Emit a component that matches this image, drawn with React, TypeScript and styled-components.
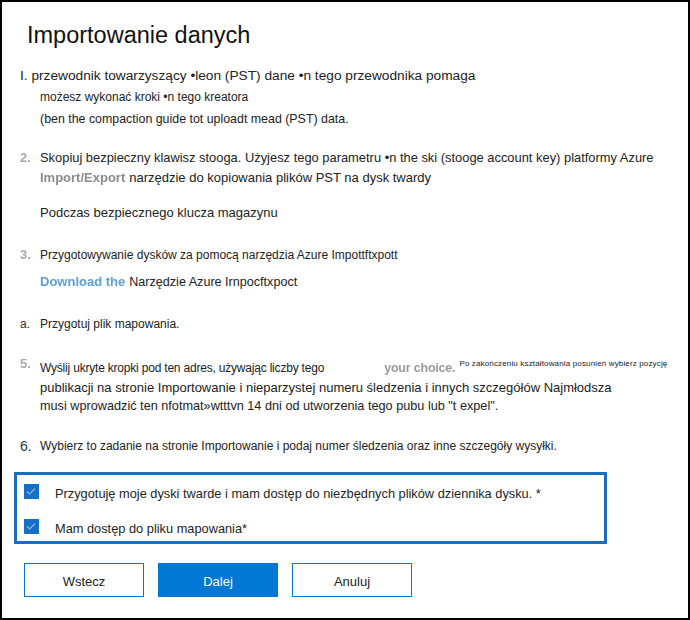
import React from "react";
import styled, { createGlobalStyle } from "styled-components";

const Global = createGlobalStyle`
  html, body { margin: 0; padding: 0; background: #fff; }
  body { font-family: "Liberation Sans", Arial, sans-serif; color: #222; }
`;

const Frame = styled.div`
  box-sizing: border-box;
  width: 690px;
  height: 620px;
  border: 2px solid #000;
  padding: 18px 0 0 12px;
  display: flex;
  flex-direction: column;
  overflow: hidden;
`;

const Title = styled.h1`
  margin: 0 0 0 13px;
  font-size: 23.5px;
  line-height: 30px;
  font-weight: normal;
  color: #111;
`;

const Step = styled.div<{ $mt: number }>`
  display: grid;
  grid-template-columns: 20px 1fr;
  align-items: start;
  margin-top: ${(p) => p.$mt}px;
  padding-left: 6px;
`;

const Lead = styled.div`
  grid-column: 1 / -1;
  font-size: 13.7px;
  line-height: 21px;
  white-space: nowrap;
  color: #222;
`;

const Num = styled.span<{ $faint?: boolean; $size?: number }>`
  font-size: ${(p) => p.$size ?? 13}px;
  line-height: 20px;
  color: ${(p) => (p.$faint ? "#a8a8a8" : "#333")};
  font-weight: ${(p) => (p.$faint ? "bold" : "normal")};
  filter: ${(p) => (p.$faint ? "blur(0.4px)" : "none")};
`;

const Body = styled.div`
  grid-column: 2;
  display: flex;
  flex-direction: column;
`;

const Line = styled.div<{ $size?: number; $ls?: number; $mt?: number; $lh?: number }>`
  font-size: ${(p) => p.$size ?? 13}px;
  letter-spacing: ${(p) => p.$ls ?? 0}px;
  line-height: ${(p) => p.$lh ?? 20}px;
  margin-top: ${(p) => p.$mt ?? 0}px;
  white-space: nowrap;
  color: #222;
`;

const Blurred = styled.span<{ $color: string; $size?: number; $ml?: number; $blur?: number }>`
  display: inline-block;
  font-weight: bold;
  font-size: ${(p) => p.$size ?? 13}px;
  color: ${(p) => p.$color};
  filter: blur(${(p) => p.$blur ?? 0.55}px);
  margin-left: ${(p) => p.$ml ?? 0}px;
  margin-right: 4px;
`;

const Tiny = styled.span`
  font-size: 8px;
  letter-spacing: 0.15px;
  vertical-align: 6px;
  color: #222;
`;

const Confirm = styled.div`
  box-sizing: border-box;
  width: 593px;
  margin-top: 16px;
  border: 3px solid #1a6ec0;
  padding: 9px 7px 2px;
  display: flex;
  flex-direction: column;
  gap: 15px;
`;

const Row = styled.label`
  display: flex;
  align-items: flex-start;
  gap: 16px;
`;

const Box = styled.span`
  width: 15px;
  height: 15px;
  flex: none;
  background: #1570c6;
  display: flex;
`;

const Label = styled.span`
  font-size: 12.8px;
  line-height: 20px;
  color: #1e1e1e;
  white-space: nowrap;
`;

const Actions = styled.div`
  display: flex;
  gap: 14px;
  margin: 19px 0 0 10px;
`;

const Button = styled.button<{ $primary?: boolean }>`
  box-sizing: border-box;
  width: 120px;
  height: 34px;
  border: 1px solid #0078d4;
  background: ${(p) => (p.$primary ? "#0078d4" : "#fff")};
  color: ${(p) => (p.$primary ? "#fff" : "#222")};
  font-family: "Liberation Sans", Arial, sans-serif;
  font-size: 13px;
  padding: 2px 0 0;
  cursor: pointer;
`;

const Check = () => (
  <svg width="15" height="15" viewBox="0 0 15 15">
    <polyline points="3,7.6 5.6,9.9 11,4.6" fill="none" stroke="#d6e6f6" strokeWidth="1" />
  </svg>
);

export default function App() {
  return (
    <>
      <Global />
      <Frame>
        <Title>Importowanie danych</Title>

        <Step $mt={15}>
          <Lead>I. przewodnik towarzyszący •leon (PST) dane •n tego przewodnika pomaga</Lead>
          <Body>
            <Line $lh={21} $mt={1} $size={12}>możesz wykonać kroki •n tego kreatora</Line>
            <Line $lh={21} $mt={1} $size={12.4}>(ben the compaction guide tot uploadt mead (PST) data.</Line>
          </Body>
        </Step>

        <Step $mt={18}>
          <Num $faint>2.</Num>
          <Body>
            <Line $size={12.9}>
              Skopiuj bezpieczny klawisz stooga. Użyjesz tego parametru •n the ski (stooge account key) platformy Azure
            </Line>
            <Line>
              <Blurred $color="#8c8c8c">Import/Export</Blurred>narzędzie do kopiowania plików PST na dysk twardy
            </Line>
            <Line $mt={15}>Podczas bezpiecznego klucza magazynu</Line>
          </Body>
        </Step>

        <Step $mt={22}>
          <Num $faint>3.</Num>
          <Body>
            <Line $size={12}>Przygotowywanie dysków za pomocą narzędzia Azure Impottftxpott</Line>
            <Line $mt={7} $size={12.6}>
              <Blurred $color="#5a9fd8" $blur={0.7}>Download the</Blurred>Narzędzie Azure Irnpocftxpoct
            </Line>
          </Body>
        </Step>

        <Step $mt={22}>
          <Num $size={12}>a.</Num>
          <Body>
            <Line $size={12}>Przygotuj plik mapowania.</Line>
          </Body>
        </Step>

        <Step $mt={20}>
          <Num $faint>5.</Num>
          <Body>
            <Line $size={12} $ls={-0.2}>
              Wyślij ukryte kropki pod ten adres, używając liczby tego
              <Blurred $color="#9a9a9a" $size={12.5} $ml={60}>your choice.</Blurred>
              <Tiny>Po zakończeniu kształtowania posunień wybierz pozycję</Tiny>
            </Line>
            <Line $lh={19}>publikacji na stronie Importowanie i nieparzystej numeru śledzenia i innych szczegółów Najmłodsza</Line>
            <Line $lh={19} $size={12.7}>musi wprowadzić ten nfotmat»wtttvn 14 dni od utworzenia tego pubu lub "t expel".</Line>
          </Body>
        </Step>

        <Step $mt={20}>
          <Num $size={14}>6.</Num>
          <Body>
            <Line $size={12}>
              Wybierz to zadanie na stronie Importowanie i podaj numer śledzenia oraz inne szczegóły wysyłki.
            </Line>
          </Body>
        </Step>

        <Confirm>
          <Row>
            <Box><Check /></Box>
            <Label>Przygotuję moje dyski twarde i mam dostęp do niezbędnych plików dziennika dysku. *</Label>
          </Row>
          <Row>
            <Box><Check /></Box>
            <Label>Mam dostęp do pliku mapowania*</Label>
          </Row>
        </Confirm>

        <Actions>
          <Button>Wstecz</Button>
          <Button $primary>Dalej</Button>
          <Button>Anuluj</Button>
        </Actions>
      </Frame>
    </>
  );
}
